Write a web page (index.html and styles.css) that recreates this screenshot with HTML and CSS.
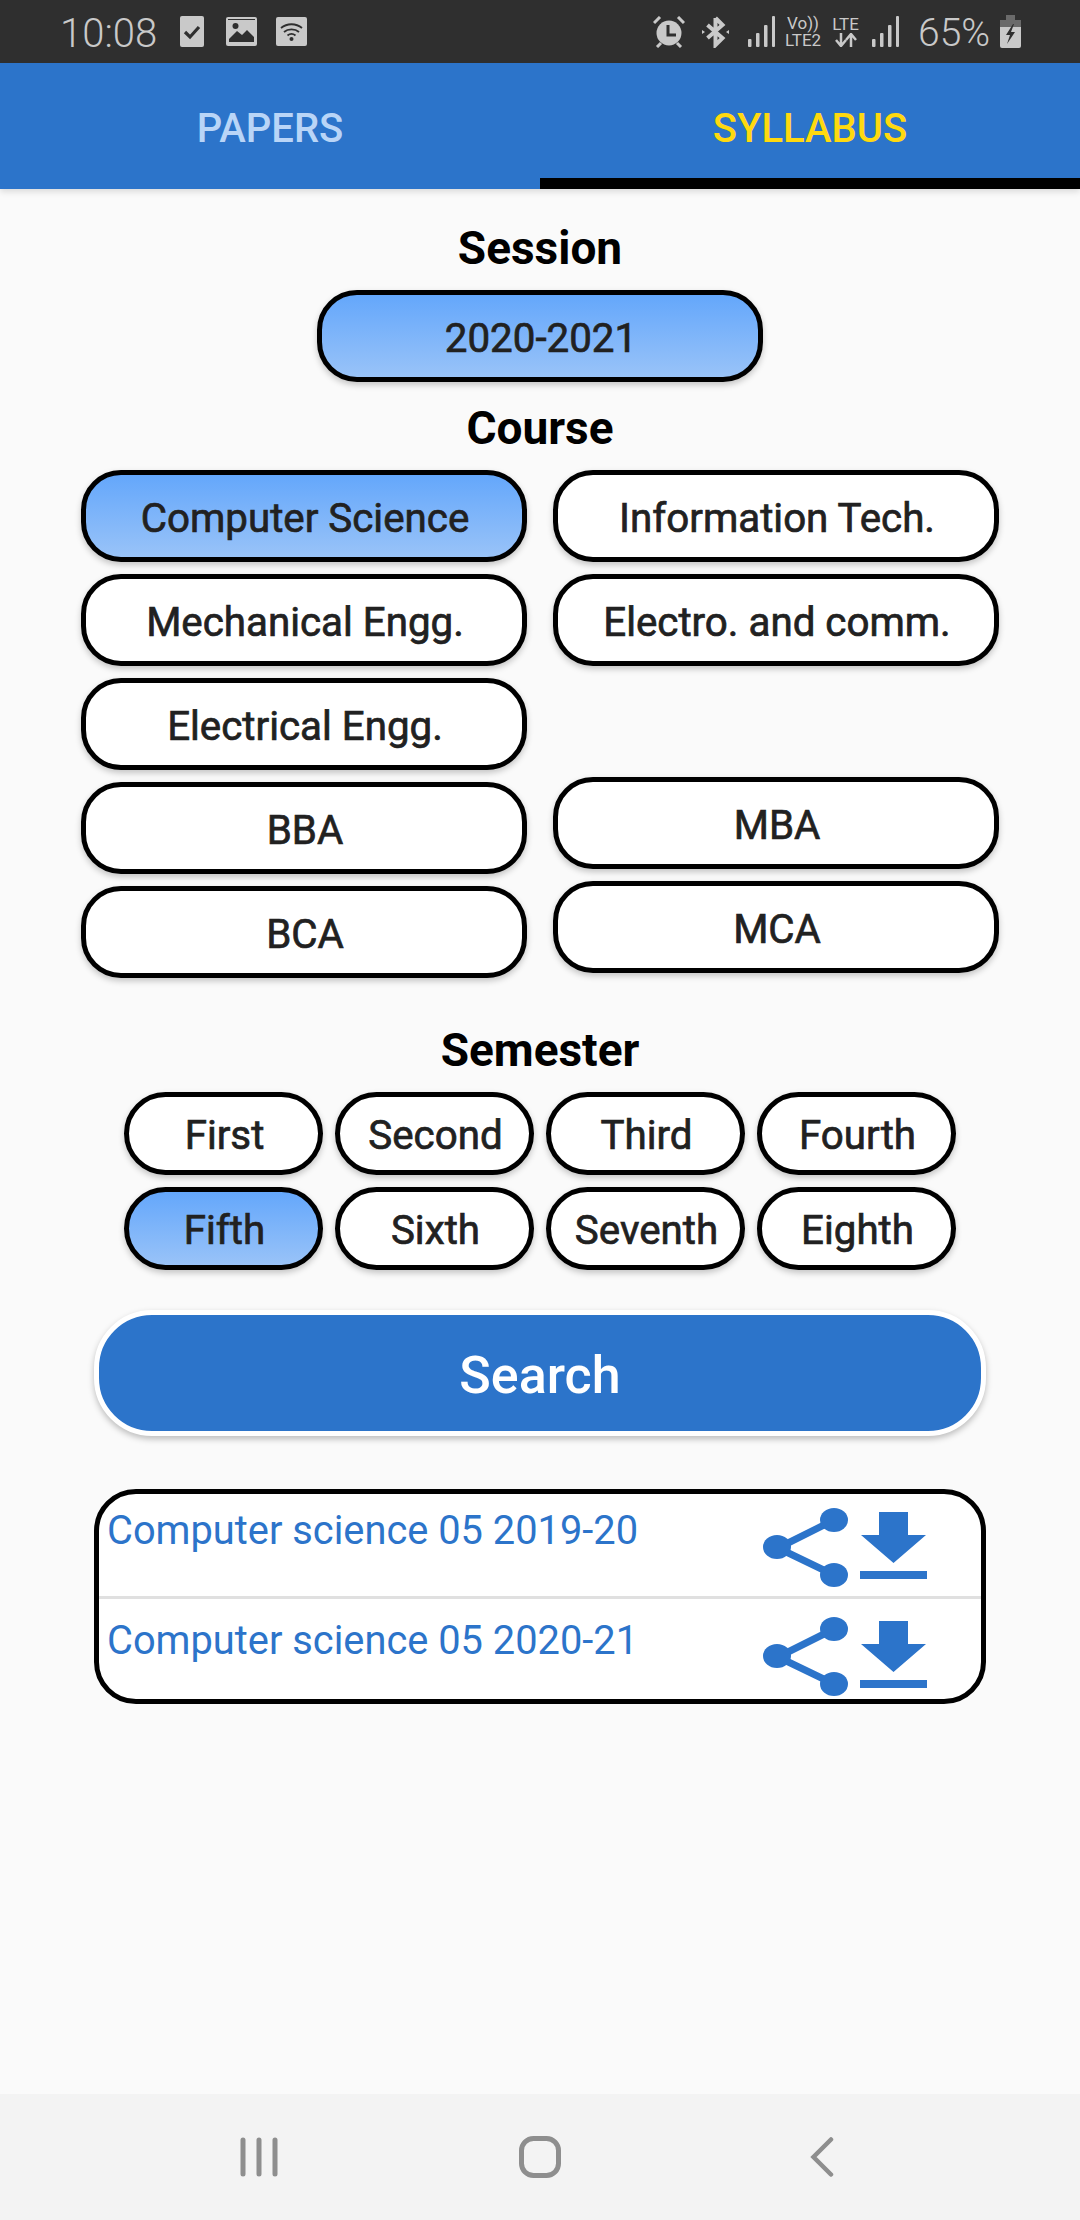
FILE: index.html
```html
<!DOCTYPE html>
<html lang="en">
  <head>
    <meta charset="UTF-8" />
    <meta name="viewport" content="width=device-width, initial-scale=1.0" />
    <title>Syllabus</title>
    <link rel="stylesheet" href="styles.css">
  </head>
  <body>
    <div id="statusBar">
      <div class="statusGroup">
        <span class="clock">10:08</span>
        <svg class="checkIcon" width="24" height="31" viewBox="0 0 24 31">
          <rect width="24" height="31" rx="2" fill="#c9c9c9" />
          <path d="M5 16l5 5 9-10" fill="none" stroke="#2f2f2f" stroke-width="3.2" />
        </svg>
        <svg class="imageIcon" width="31" height="29" viewBox="0 0 31 29">
          <rect width="31" height="29" rx="2" fill="#c9c9c9" />
          <circle cx="9.500" cy="9" r="3" fill="#2f2f2f" />
          <path d="M3 27v-5l8-8 5 4 5-5 7 7v7z" fill="#2f2f2f" />
          <path d="M3 25h25v2H3z" fill="#c9c9c9" />
          <path d="M2 2h27v1H2z" fill="#2f2f2f" />
        </svg>
        <svg class="wifiIcon" width="31" height="29" viewBox="0 0 31 29">
          <rect width="31" height="29" rx="2" fill="#c9c9c9" />
          <g fill="none" stroke="#2f2f2f" stroke-width="1.800">
            <path d="M5 11c6-5 15-5 21 0" />
            <path d="M8 15c4-3.500 11-3.500 15 0" />
            <path d="M11.500 18.500c2.400-2 5.600-2 8 0" />
          </g>
          <circle cx="15.500" cy="22" r="2" fill="#2f2f2f" />
        </svg>
      </div>
      <div class="statusGroup">
        <svg class="alarmIcon" width="32" height="32" viewBox="0 0 32 32">
          <circle cx="16" cy="17" r="12.500" fill="#c9c9c9" />
          <path d="M1 7l6-6M31 7l-6-6" stroke="#c9c9c9" stroke-width="3" fill="none" />
          <path d="M4 31l4-4M28 31l-4-4" stroke="#c9c9c9" stroke-width="3" fill="none" />
          <path d="M15 9v10h8" stroke="#2f2f2f" stroke-width="3" fill="none" />
        </svg>
        <svg class="btIcon" width="29" height="33" viewBox="0 0 29 33">
          <path d="M14.500 3v27l7-7-15-13M14.500 3l7 7-15 13" fill="none" stroke="#c9c9c9" stroke-width="4" />
          <path d="M1 15l3 2-3 2zM28 15l-3 2 3 2z" fill="#c9c9c9" />
        </svg>
        <svg class="signalIcon" width="27" height="31" viewBox="0 0 27 31">
          <g fill="#c9c9c9">
            <rect x="0" y="23" width="3.500" height="8" rx="1" />
            <rect x="8" y="17" width="3.500" height="14" rx="1" />
            <rect x="16" y="9" width="3.500" height="22" rx="1" />
            <rect x="24" y="0" width="3" height="31" rx="1" />
          </g>
        </svg>
        <div class="netLabel volte">
          <span>Vo))</span>
          <span>LTE2</span>
        </div>
        <div class="netLabel lte">
          <span>LTE</span>
          <svg width="22" height="14" viewBox="0 0 22 14">
            <path d="M6 0v11M1 7l5 6 5-6" fill="none" stroke="#c9c9c9" stroke-width="2.500" />
            <path d="M16 14V3M11 7l5-6 5 6" fill="none" stroke="#c9c9c9" stroke-width="2.500" />
          </svg>
        </div>
        <svg class="signalIcon second" width="27" height="31" viewBox="0 0 27 31">
          <g fill="#c9c9c9">
            <rect x="0" y="23" width="3.500" height="8" rx="1" />
            <rect x="8" y="17" width="3.500" height="14" rx="1" />
            <rect x="16" y="9" width="3.500" height="22" rx="1" />
            <rect x="24" y="0" width="3" height="31" rx="1" />
          </g>
        </svg>
        <span class="battery">65%</span>
        <svg class="batteryIcon" width="21" height="33" viewBox="0 0 21 33">
          <path d="M6 0h9v5h6v7H0V5h6z" fill="#6a6a6a" />
          <path d="M0 12h21v19a2 2 0 0 1-2 2H2a2 2 0 0 1-2-2z" fill="#c9c9c9" />
          <path d="M13 9l-7 11h4l-3 9 8-12h-4l3-8z" fill="#2f2f2f" />
        </svg>
      </div>
    </div>

    <div id="tabs">
      <div class="tab">PAPERS</div>
      <div class="tab active">SYLLABUS</div>
    </div>

    <div id="content">
      <h2 class="sessionTitle">Session</h2>
      <div class="pill selected sessionPill">2020-2021</div>

      <h2 class="courseTitle">Course</h2>
      <div id="courses">
        <div class="courseCol">
          <div class="pill selected">Computer Science</div>
          <div class="pill">Mechanical Engg.</div>
          <div class="pill">Electrical Engg.</div>
          <div class="pill">BBA</div>
          <div class="pill">BCA</div>
        </div>
        <div class="courseCol">
          <div class="pill">Information Tech.</div>
          <div class="pill">Electro. and comm.</div>
          <div class="courseGap"></div>
          <div class="pill">MBA</div>
          <div class="pill">MCA</div>
        </div>
      </div>

      <h2 class="semesterTitle">Semester</h2>
      <div id="semesters">
        <div class="pill sem">First</div>
        <div class="pill sem">Second</div>
        <div class="pill sem">Third</div>
        <div class="pill sem">Fourth</div>
        <div class="pill sem selected">Fifth</div>
        <div class="pill sem">Sixth</div>
        <div class="pill sem">Seventh</div>
        <div class="pill sem">Eighth</div>
      </div>

      <div id="searchBtn">Search</div>

      <div id="results">
        <div class="result">
          <span class="resultName">Computer science 05 2019-20</span>
          <svg class="shareIcon" width="86" height="80" viewBox="0 0 86 80">
            <path d="M16 40L72 12M16 40L72 67" stroke="#2c74ca" stroke-width="7" fill="none" />
            <ellipse cx="15" cy="39" rx="14" ry="12" fill="#2c74ca" />
            <ellipse cx="72" cy="12" rx="14" ry="12" fill="#2c74ca" />
            <ellipse cx="72" cy="67" rx="14" ry="12" fill="#2c74ca" />
          </svg>
          <svg class="downloadIcon" width="67" height="67" viewBox="0 0 67 67">
            <path d="M19 0h29v23h18L33.500 51 1 23h18z" fill="#2c74ca" />
            <rect y="59" width="67" height="8" fill="#2c74ca" />
          </svg>
        </div>
        <div class="result">
          <span class="resultName">Computer science 05 2020-21</span>
          <svg class="shareIcon" width="86" height="80" viewBox="0 0 86 80">
            <path d="M16 40L72 12M16 40L72 67" stroke="#2c74ca" stroke-width="7" fill="none" />
            <ellipse cx="15" cy="39" rx="14" ry="12" fill="#2c74ca" />
            <ellipse cx="72" cy="12" rx="14" ry="12" fill="#2c74ca" />
            <ellipse cx="72" cy="67" rx="14" ry="12" fill="#2c74ca" />
          </svg>
          <svg class="downloadIcon" width="67" height="67" viewBox="0 0 67 67">
            <path d="M19 0h29v23h18L33.500 51 1 23h18z" fill="#2c74ca" />
            <rect y="59" width="67" height="8" fill="#2c74ca" />
          </svg>
        </div>
      </div>
    </div>

    <div id="navBar">
      <svg width="38" height="40" viewBox="0 0 38 40">
        <path d="M3 3v34M19 3v34M35 3v34" stroke="#8e8e8e" stroke-width="5" stroke-linecap="round" fill="none" />
      </svg>
      <svg class="navHome" width="42" height="42" viewBox="0 0 42 42">
        <rect x="2.500" y="2.500" width="37" height="37" rx="12" stroke="#8e8e8e" stroke-width="5" fill="none" />
      </svg>
      <svg class="navBack" width="24" height="40" viewBox="0 0 24 40">
        <path d="M21 2.500L3.500 20 21 37.500" stroke="#8e8e8e" stroke-width="4.500" stroke-linecap="round" fill="none" />
      </svg>
    </div>
  </body>
</html>
```

FILE: styles.css
```css
* {
  box-sizing: border-box;
}

body {
  margin: 0;
  width: 1080px;
  height: 2220px;
  display: flex;
  flex-direction: column;
  background-color: #fafafa;
  font-family: "Roboto", sans-serif;
  color: #212121;
  overflow: hidden;
}

#statusBar {
  height: 63px;
  flex: none;
  display: flex;
  justify-content: space-between;
  align-items: center;
  background-color: #2f2f2f;
  color: #c9c9c9;
  padding: 0 59px 0 60px;
}

.statusGroup {
  display: flex;
  align-items: center;
}

.clock {
  font-size: 40px;
  font-weight: 300;
  width: 96px;
  padding-top: 3px;
}

.checkIcon {
  margin-left: 24px;
}
.imageIcon {
  margin-left: 22px;
}
.wifiIcon {
  margin-left: 19px;
}
.btIcon {
  margin-left: 16px;
}
.signalIcon {
  margin-left: 18px;
}
.signalIcon.second {
  margin-left: 11px;
}

.netLabel {
  display: flex;
  flex-direction: column;
  align-items: center;
  font-size: 17px;
  line-height: 17px;
}
.volte {
  margin-left: 8px;
  width: 40px;
}
.lte {
  margin-left: 7px;
  width: 31px;
}

.battery {
  margin-left: 19px;
  width: 69px;
  padding-top: 3px;
  font-size: 39px;
  font-weight: 300;
}

.batteryIcon {
  margin-left: 13px;
}

#tabs {
  height: 126px;
  flex: none;
  display: flex;
  background-color: #2c74ca;
  box-shadow: 0 3px 6px rgba(0, 0, 0, 0.12);
}

.tab {
  flex: 1;
  display: flex;
  justify-content: center;
  align-items: center;
  padding-top: 4px;
  font-size: 40px;
  font-weight: 500;
  color: #b9d5f7;
}
.tab.active {
  color: #ffd90f;
  border-bottom: 11px solid #000;
  padding-top: 15px;
}

#content {
  flex: 1;
  display: flex;
  flex-direction: column;
  align-items: center;
}

h2 {
  margin: 0;
  font-size: 46px;
  font-weight: 700;
  line-height: 52px;
  color: #000;
}

.sessionTitle {
  margin-top: 33px;
}

.courseTitle {
  margin-top: 20px;
}

.semesterTitle {
  margin-top: 46px;
}

.pill {
  height: 92px;
  display: flex;
  justify-content: center;
  align-items: center;
  padding-top: 4px;
  padding-left: 2px;
  background-color: #fff;
  border: 5px solid #000;
  border-radius: 40px;
  box-shadow: 0 3px 6px rgba(0, 0, 0, 0.22);
  font-size: 40.300px;
  -webkit-text-stroke: 0.7px #212121;
}
.pill.selected {
  background-image: linear-gradient(#64a7fb, #99c3f8);
}

.sessionPill {
  width: 446px;
  margin-top: 16px;
}

#courses {
  display: grid;
  grid-template-columns: 446px 446px;
  column-gap: 26px;
  margin-top: 16px;
}

.courseCol {
  display: flex;
  flex-direction: column;
  gap: 12px;
}

.courseGap {
  height: 87px;
}

#semesters {
  display: grid;
  grid-template-columns: repeat(4, 199px);
  gap: 12px;
  margin-top: 16px;
}

.pill.sem {
  height: 83px;
  padding-top: 4px;
  border-radius: 42px;
}

#searchBtn {
  width: 892px;
  height: 126px;
  margin-top: 40px;
  display: flex;
  justify-content: center;
  align-items: center;
  padding-top: 4px;
  background-color: #2c74ca;
  border: 5px solid #fff;
  border-radius: 58px;
  box-shadow: 0 3px 6px rgba(0, 0, 0, 0.25);
  color: #fff;
  font-size: 52px;
  font-weight: 500;
}

#results {
  width: 892px;
  margin-top: 53px;
  background-color: #fff;
  border: 5px solid #000;
  border-radius: 42px;
  overflow: hidden;
}

.result {
  height: 102px;
  display: flex;
  align-items: center;
  padding: 0 54px 0 8px;
  color: #2c74ca;
}
.result + .result {
  height: 103px;
  padding-top: 10px;
  border-top: 3px solid #e0e0e0;
}

.resultName {
  flex: 1;
  align-self: flex-start;
  margin-top: 13px;
  font-size: 39.800px;
  line-height: 47px;
}
.result + .result .resultName {
  margin-top: 8px;
}

.shareIcon {
  margin-top: 5px;
}

.downloadIcon {
  margin-left: 12px;
}

#navBar {
  height: 126px;
  flex: none;
  display: flex;
  align-items: center;
  background-color: #f3f3f3;
  padding: 0 0 1px 240px;
}

.navHome {
  margin-left: 241px;
}

.navBack {
  margin-left: 249px;
}
```
